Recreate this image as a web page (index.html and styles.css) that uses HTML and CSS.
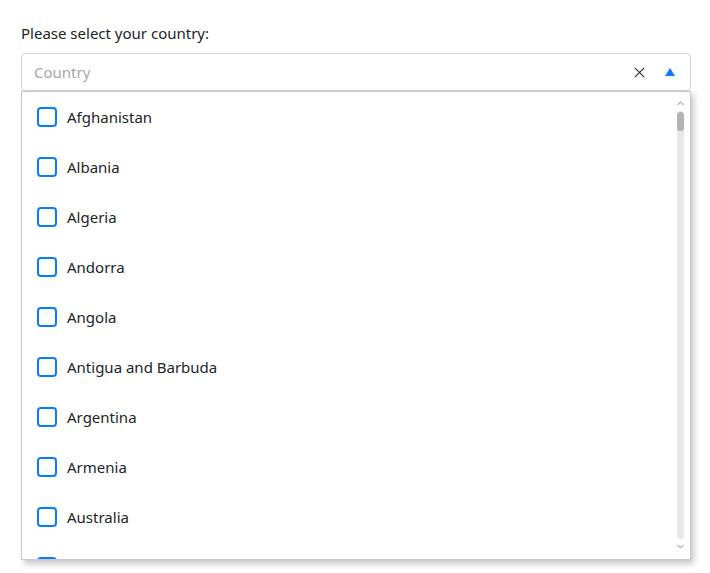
FILE: index.html
```html
<!DOCTYPE html>
<html lang="en">
<head>
<meta charset="utf-8">
<title>Country select</title>
<link rel="stylesheet" href="styles.css">
</head>
<body>
<div class="field">
  <label class="label" for="country">Please select your country:</label>
  <div class="select">
    <div class="control">
      <input id="country" class="input" type="text" placeholder="Country">
      <button class="clear" type="button" aria-label="Clear">
        <svg width="11" height="11" viewBox="0 0 11 11"><path d="M0.8 0.8L10.2 10.2M10.2 0.8L0.8 10.2" stroke="#333" stroke-width="1.2" fill="none"/></svg>
      </button>
      <button class="toggle" type="button" aria-label="Toggle">
        <svg width="10" height="8" viewBox="0 0 10 8"><path d="M5 0L10 8H0Z" fill="#0a7cff"/></svg>
      </button>
    </div>
    <div class="menu">
      <ul class="list">
        <li class="item"><span class="box"></span><span>Afghanistan</span></li>
        <li class="item"><span class="box"></span><span>Albania</span></li>
        <li class="item"><span class="box"></span><span>Algeria</span></li>
        <li class="item"><span class="box"></span><span>Andorra</span></li>
        <li class="item"><span class="box"></span><span>Angola</span></li>
        <li class="item"><span class="box"></span><span>Antigua and Barbuda</span></li>
        <li class="item"><span class="box"></span><span>Argentina</span></li>
        <li class="item"><span class="box"></span><span>Armenia</span></li>
        <li class="item"><span class="box"></span><span>Australia</span></li>
        <li class="item"><span class="box"></span><span>Austria</span></li>
      </ul>
      <div class="scrollbar">
        <svg class="arrow" width="7" height="5" viewBox="0 0 7 5"><path d="M0.5 4L3.5 1L6.5 4" stroke="#b5b5b5" stroke-width="1.2" fill="none"/></svg>
        <div class="track"><div class="thumb"></div></div>
        <svg class="arrow" width="7" height="5" viewBox="0 0 7 5"><path d="M0.5 1L3.5 4L6.5 1" stroke="#b5b5b5" stroke-width="1.2" fill="none"/></svg>
      </div>
    </div>
  </div>
</div>
</body>
</html>
```
FILE: styles.css
```css
* { box-sizing: border-box; }
html, body { height: 100%; }
body {
  margin: 0;
  padding: 23px 19px 0 21px;
  font-family: "Noto Sans", "Open Sans", sans-serif;
  font-size: 15px;
  color: #212529;
  background: #fff;
}
.field { display: flex; flex-direction: column; }
.label {
  line-height: 21px;
  margin-bottom: 9px;
}
.select { display: flex; flex-direction: column; }
.control {
  display: flex;
  align-items: center;
  height: 38px;
  border: 1px solid #ced4da;
  border-radius: 4px;
  padding: 0 15px 0 12px;
  background: #fff;
}
.input {
  flex: 1;
  border: none;
  outline: none;
  font: inherit;
  font-size: 15px;
  color: #212529;
  padding: 0;
  background: transparent;
}
.input::placeholder { color: #a8a8a8; }
.clear, .toggle {
  border: none;
  background: none;
  padding: 0;
  display: flex;
  align-items: center;
  cursor: pointer;
}
.clear { margin-right: 20px; }
.menu {
  display: flex;
  width: 670px;
  height: 469px;
  background: #fff;
  border: 1px solid #c9c9c9;
  box-shadow: 3px 4px 6px rgba(0,0,0,0.22);
  overflow: hidden;
}
.list {
  flex: 1;
  list-style: none;
  margin: 0;
  padding: 0;
}
.item {
  display: flex;
  align-items: center;
  height: 50px;
  padding-left: 15px;
  gap: 10px;
}
.box {
  width: 20px;
  height: 20px;
  border: 2px solid #0a7cff;
  border-radius: 4px;
  flex: none;
}
.scrollbar {
  flex: none;
  width: 8px;
  margin: 9px 6px 10px 0;
  display: flex;
  flex-direction: column;
  align-items: center;
  gap: 5px;
}
.arrow { flex: none; }
.track {
  flex: 1;
  width: 7px;
  background: #e8e8e8;
  border-radius: 4px;
}
.thumb {
  width: 7px;
  height: 19px;
  margin-top: 1px;
  background: #b3b3b3;
  border-radius: 4px;
}
```
